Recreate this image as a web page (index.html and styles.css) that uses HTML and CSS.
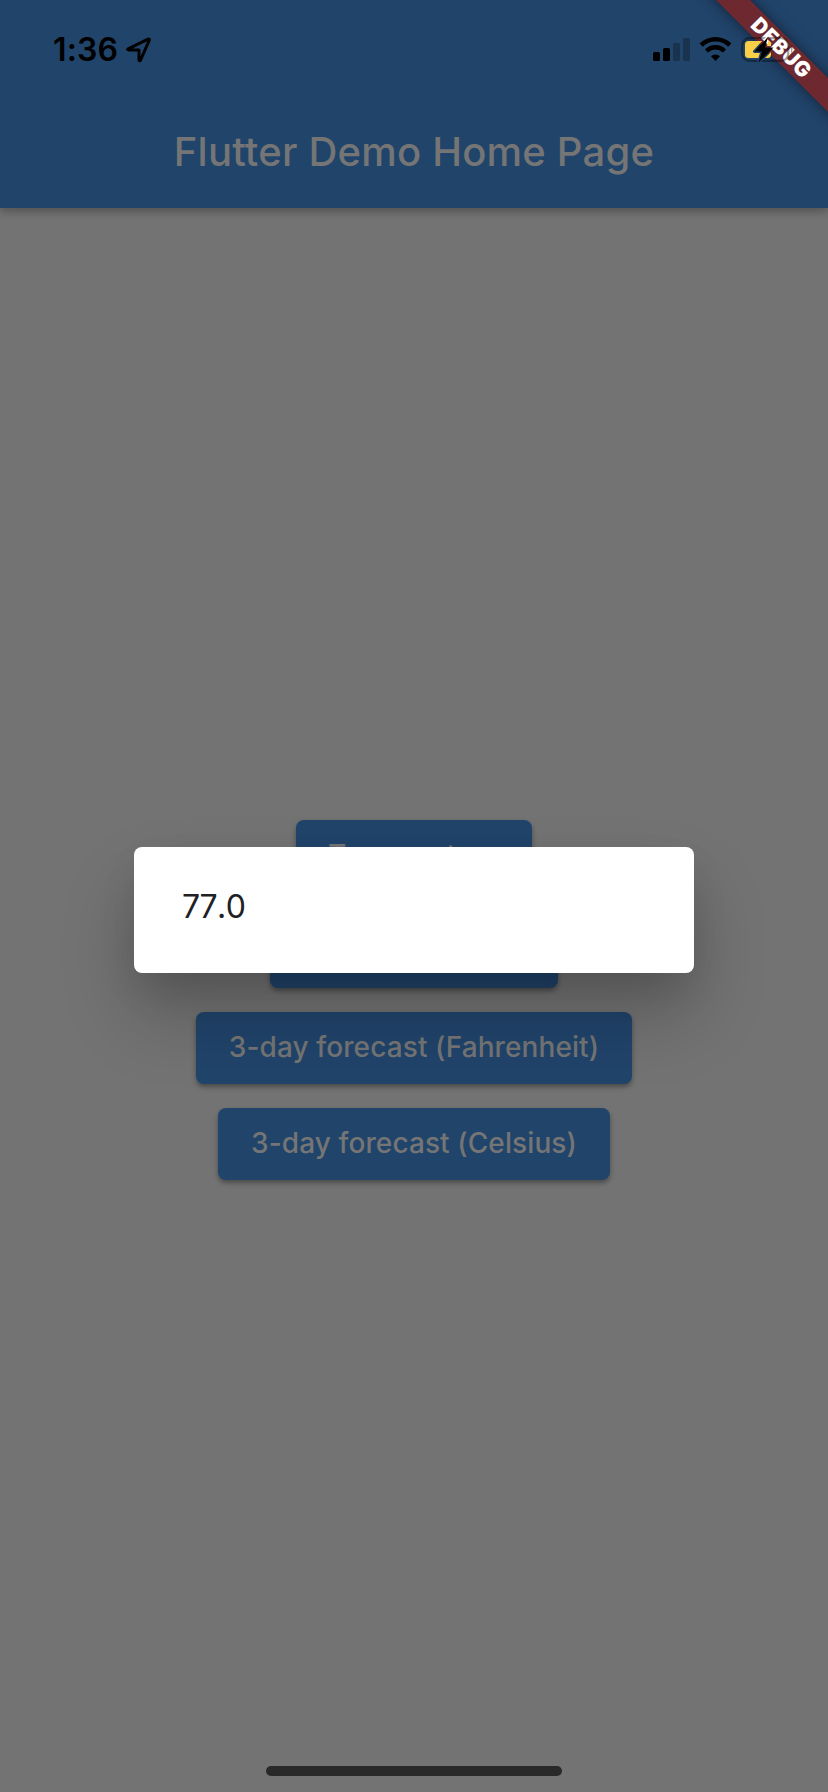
FILE: index.html
```html
<!DOCTYPE html>
<html lang="en">
<head>
<meta charset="utf-8">
<title>Flutter Demo</title>
<link rel="stylesheet" href="styles.css">
</head>
<body>
<div class="screen">
  <header class="app-bar">
    <div class="status">
      <span class="time">1:36</span>
      <svg class="location" width="26" height="26" viewBox="0 0 26 26"><path d="M2.200 11.800 22 2.200Q23.800 1.600 23.100 3.600L14.600 23Q13.400 24.600 13 22.600V13H3Q.8 12.600 2.200 11.800Z"/></svg>
      <svg class="indicators" width="142" height="28" viewBox="0 0 142 28">
        <mask id="gap">
          <rect width="142" height="28" fill="#fff"/>
          <path class="bolt-gap" d="M115 1 101.500 15.500H109L105.500 26.500 120.500 11.500H112Z"/>
        </mask>
        <rect x="0" y="16" width="7" height="9" rx="1.5"/>
        <rect x="10" y="12" width="7" height="13" rx="1.5"/>
        <rect class="dim" x="20" y="7" width="7" height="18" rx="1.5"/>
        <rect class="dim" x="30" y="2" width="7" height="23" rx="1.5"/>
        <g class="wifi">
          <path d="M48.200 9.200a20.300 20.300 0 0 1 28.600 0"/>
          <path d="M53.500 15a12.800 12.800 0 0 1 18 0"/>
          <path class="solid" d="M58 20.200a6.500 6.500 0 0 1 9 0L62.500 25Z"/>
        </g>
        <g mask="url(#gap)">
          <rect class="case" x="89.2" y="2.2" width="46" height="22.600" rx="7"/>
          <rect class="charge" x="92" y="5" width="26" height="17" rx="3.500"/>
        </g>
        <path class="nub" d="M138 9.500q3 4 0 8Z"/>
        <path d="M115 1 101.500 15.500H109L105.500 26.500 120.500 11.500H112Z"/>
      </svg>
    </div>
    <h1 class="title">Flutter Demo Home Page</h1>
  </header>
  <main class="actions">
    <button class="button temperature">Temperature</button>
    <button class="button wide" aria-label="Action"></button>
    <button class="button fahrenheit">3-day forecast (Fahrenheit)</button>
    <button class="button celsius">3-day forecast (Celsius)</button>
  </main>
  <footer class="home"><div class="home-bar"></div></footer>
  <div class="dialog" role="dialog"><span>77.0</span></div>
  <div class="banner"><span>DEBUG</span></div>
</div>
</body>
</html>
```
FILE: styles.css
```css
* { box-sizing: border-box; }
body { margin: 0; font-family: Inter, Roboto, sans-serif; }
.screen { position: relative; display: flex; flex-direction: column; width: 828px; height: 1792px; overflow: hidden; background: #737373; }
.app-bar { height: 208px; flex: none; background: #21446b; box-shadow: 0 4px 8px rgba(0,0,0,.2), 0 2px 10px rgba(0,0,0,.1); }
.status { position: relative; z-index: 2; display: flex; height: 96px; padding: 0 33px 0 53px; }
.time { width: 73px; padding-top: 30px; font-size: 32px; line-height: 40px; font-weight: 600; letter-spacing: .1px; white-space: nowrap; }
.location { margin: 37px auto 0 0; fill: none; stroke: #000; stroke-width: 3; stroke-linejoin: round; }
.indicators { margin-top: 36px; }
.dim { fill: #19334f; }
.wifi { fill: none; stroke: #000; stroke-width: 4.5; }
.wifi .solid { fill: #000; stroke: none; }
.case { fill: none; stroke: #000; stroke-opacity: .36; stroke-width: 2.2; }
.nub { fill: #000; fill-opacity: .36; }
.charge { fill: #f8cf47; }
.bolt-gap { fill: #000; stroke: #000; stroke-width: 3; stroke-linejoin: round; }
.title { margin: 32px 0 0; text-align: center; font-size: 40px; line-height: 48px; font-weight: 550; letter-spacing: .2px; color: #757575; white-space: nowrap; }
.actions { flex: 1; display: flex; flex-direction: column; align-items: center; gap: 24px; padding-top: 612px; }
.button { height: 72px; border: 0; padding: 0 0 2px; border-radius: 8px; background: #21446b; color: #757575; font: 550 28px Inter, Roboto, sans-serif; letter-spacing: .1px; white-space: nowrap; box-shadow: 0 3px 5px rgba(0,0,0,.35); }
.temperature { width: 236px; }
.wide { width: 288px; }
.fahrenheit { width: 436px; }
.celsius { width: 392px; }
.home { display: flex; justify-content: center; height: 26px; }
.home-bar { width: 296px; height: 10px; border-radius: 5px; background: #292929; }
.dialog { position: absolute; left: 134px; top: 847px; width: 560px; height: 126px; padding: 40px 48px; border-radius: 8px; background: #fff; color: #202124; font-size: 32px; line-height: 40px; font-weight: 400; font-kerning: none; letter-spacing: -.6px; box-shadow: 0 42px 72px 2px rgba(0,0,0,.2), 0 18px 40px -6px rgba(0,0,0,.12); }
.banner { position: absolute; z-index: 1; left: 680px; top: 35px; width: 200px; height: 24px; transform: rotate(45deg); background: #6d292f; box-shadow: 0 0 14px rgba(0,0,0,.5); color: #fff; text-align: center; font-size: 21px; line-height: 24px; font-weight: 900; letter-spacing: .5px; padding-left: 3px; }
```
